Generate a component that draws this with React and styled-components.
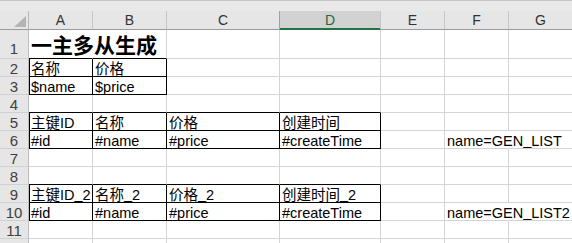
import React from "react";
import styled, { createGlobalStyle } from "styled-components";

const GlobalStyle = createGlobalStyle`
  html, body {
    margin: 0;
    padding: 0;
    background: #fff;
    overflow: hidden;
  }
  body {
    font-family: "Liberation Sans", "Noto Sans CJK SC", sans-serif;
  }
`;

const COLS = [
  { key: "A", width: 64 },
  { key: "B", width: 74 },
  { key: "C", width: 113 },
  { key: "D", width: 101 },
  { key: "E", width: 64 },
  { key: "F", width: 64 },
  { key: "G", width: 64 },
];

const ROW_COUNT = 12;
const ACTIVE_COL = "D";

const CONTENT = {
  1: { A: "一主多从生成" },
  2: { A: "名称", B: "价格" },
  3: { A: "$name", B: "$price" },
  5: { A: "主键ID", B: "名称", C: "价格", D: "创建时间" },
  6: { A: "#id", B: "#name", C: "#price", D: "#createTime", F: "name=GEN_LIST" },
  9: { A: "主键ID_2", B: "名称_2", C: "价格_2", D: "创建时间_2" },
  10: { A: "#id", B: "#name", C: "#price", D: "#createTime", F: "name=GEN_LIST2" },
};

// cells whose text runs over the next column, so that gridline is hidden
const SPILL = { "1A": true, "6F": true, "10F": true };

const BOXES = [
  { rows: [2, 3], cols: [0, 1] },
  { rows: [5, 6], cols: [0, 3] },
  { rows: [9, 10], cols: [0, 3] },
];

const isBoxed = (r, c) =>
  BOXES.some((b) => r >= b.rows[0] && r <= b.rows[1] && c >= b.cols[0] && c <= b.cols[1]);

const GRID_LINE = "#d4d4d4";

const Sheet = styled.div`
  width: 572px;
  height: 243px;
  overflow: hidden;
  background: #fff;
`;

const TopStrip = styled.div`
  height: 10px;
  background: #e9e9e9;
  border-top: 1px solid #c8c8c8;
`;

const Grid = styled.div`
  display: grid;
  grid-template-columns: 29px ${COLS.map((c) => c.width + "px").join(" ")};
  grid-template-rows: 19px 29px;
  grid-auto-rows: 18px;
  background: #fff;
`;

const Corner = styled.div`
  box-sizing: border-box;
  background: #e6e6e6;
  border-right: 1px solid #b8b8b8;
  border-bottom: 1px solid #9b9b9b;
  display: flex;
  align-items: flex-end;
  justify-content: flex-end;
  padding: 0 2px 2px 0;
`;

const CornerMark = styled.span`
  width: 12px;
  height: 11px;
  background: #b4b4b4;
  clip-path: polygon(100% 0, 100% 100%, 0 100%);
`;

const ColHead = styled.div`
  box-sizing: border-box;
  display: flex;
  align-items: flex-end;
  justify-content: center;
  padding-bottom: 2px;
  background: ${(p) => (p.$active ? "#d2d2d2" : "#e6e6e6")};
  border-right: 1px solid ${(p) => (p.$beforeActive ? "#a0a0a0" : "#c6c6c6")};
  border-bottom: 1px solid ${(p) => (p.$active ? "#217346" : "#9b9b9b")};
  box-shadow: ${(p) => (p.$active ? "inset 0 -1px 0 #217346" : "none")};
  color: ${(p) => (p.$active ? "#1e6b3f" : "#333")};
  font-size: 14px;
  line-height: 14px;
`;

const RowHead = styled.div`
  box-sizing: border-box;
  display: flex;
  align-items: flex-end;
  justify-content: center;
  padding-bottom: ${(p) => (p.$tall ? 2 : 0)}px;
  background: #e6e6e6;
  border-right: 1px solid #bdbdbd;
  border-bottom: 1px solid #d0d0d0;
  color: #404040;
  font-size: 15px;
  line-height: 15px;
  overflow: hidden;
`;

const Cell = styled.div`
  box-sizing: border-box;
  min-width: 0;
  display: flex;
  align-items: flex-end;
  padding: 0 0 ${(p) => (p.$title ? 4 : 0)}px 2px;
  border-right: 1px solid ${(p) => p.$right};
  border-bottom: 1px solid ${(p) => p.$bottom};
  box-shadow: ${(p) => (p.$edge ? "inset 1px 0 0 #000" : "none")};
  font-family: ${(p) =>
    p.$title ? '"Noto Sans CJK SC", sans-serif' : '"Liberation Sans", "Noto Sans CJK SC", sans-serif'};
  font-size: ${(p) => (p.$title ? "21px" : "14.5px")};
  font-weight: ${(p) => (p.$title ? 700 : 400)};
  line-height: ${(p) => (p.$title ? "20px" : "14px")};
  white-space: nowrap;
  color: #000;
`;

// the underscore sits a bit higher in Excel's font than in Liberation Sans
const Underscore = styled.span`
  vertical-align: 1px;
`;

const renderText = (text) =>
  text.split("_").map((part, i) => (
    <React.Fragment key={i}>
      {i > 0 && <Underscore>_</Underscore>}
      {part}
    </React.Fragment>
  ));

const rightColor = (r, c) => {
  if (isBoxed(r, c) || isBoxed(r, c + 1)) return "#000";
  if (SPILL[r + COLS[c].key]) return "transparent";
  return GRID_LINE;
};

const bottomColor = (r, c) => (isBoxed(r, c) || isBoxed(r + 1, c) ? "#000" : GRID_LINE);

export default function App() {
  const rows = Array.from({ length: ROW_COUNT }, (_, i) => i + 1);
  const activeIdx = COLS.findIndex((c) => c.key === ACTIVE_COL);

  return (
    <>
      <GlobalStyle />
      <Sheet>
        <TopStrip />
        <Grid>
          <Corner>
            <CornerMark />
          </Corner>
          {COLS.map((col, i) => (
            <ColHead key={col.key} $active={i === activeIdx} $beforeActive={i === activeIdx - 1}>
              {col.key}
            </ColHead>
          ))}
          {rows.map((r) => (
            <React.Fragment key={r}>
              <RowHead $tall={r === 1}>{r}</RowHead>
              {COLS.map((col, c) => {
                const text = CONTENT[r] && CONTENT[r][col.key];
                return (
                  <Cell
                    key={col.key}
                    $title={r === 1}
                    $edge={c === 0 && isBoxed(r, 0)}
                    $right={rightColor(r, c)}
                    $bottom={bottomColor(r, c)}
                  >
                    {text ? <span>{renderText(text)}</span> : null}
                  </Cell>
                );
              })}
            </React.Fragment>
          ))}
        </Grid>
      </Sheet>
    </>
  );
}
